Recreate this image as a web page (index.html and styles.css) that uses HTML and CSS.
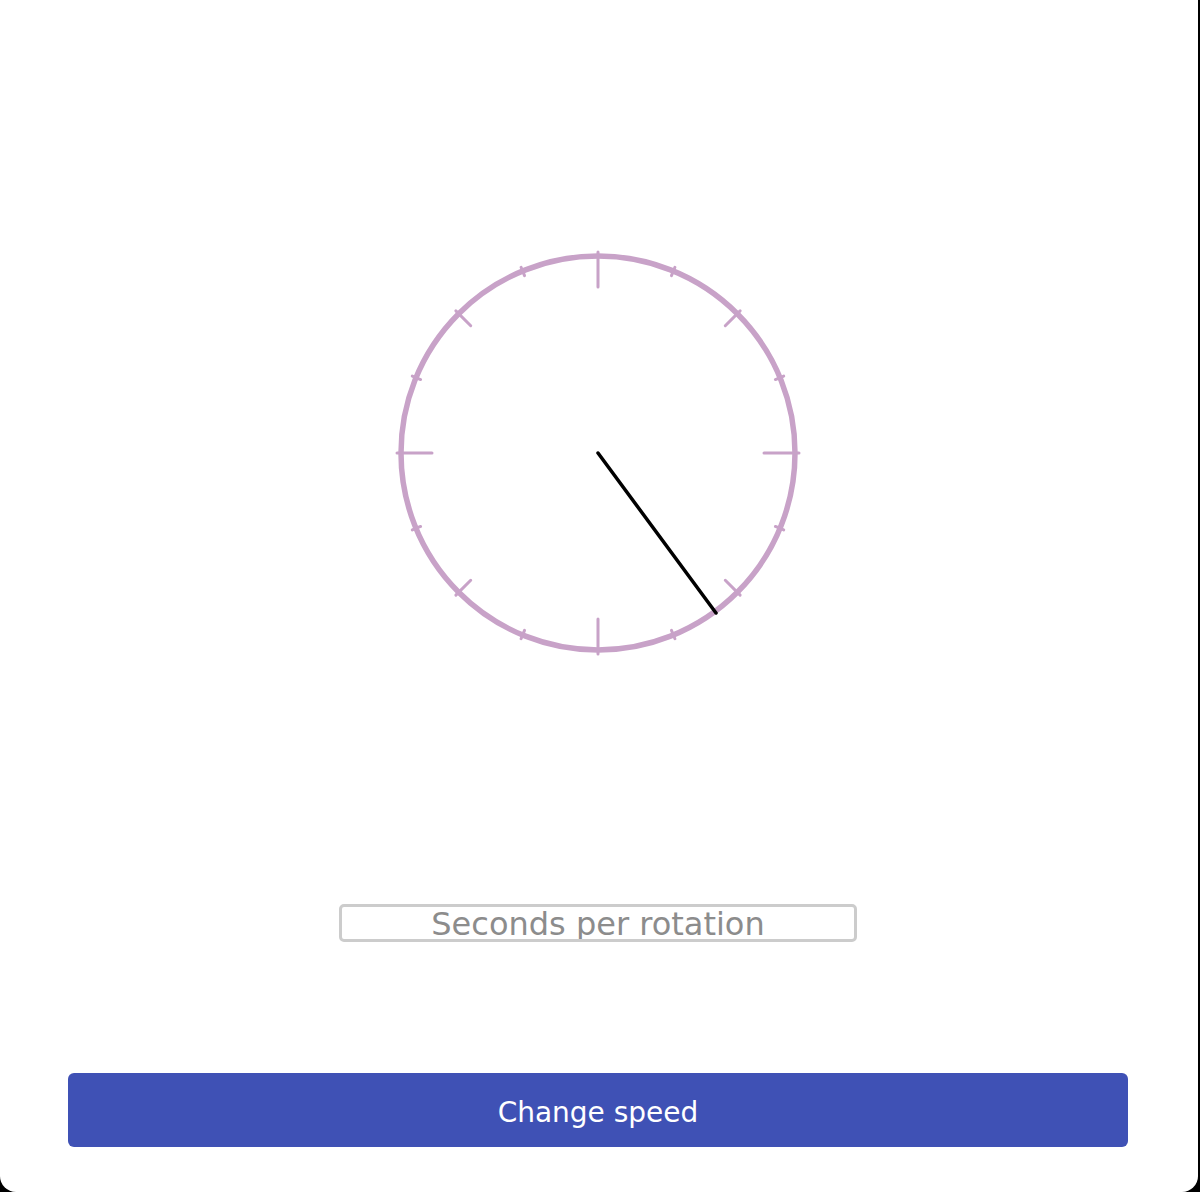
FILE: index.html
```html
<!DOCTYPE html>
<html>
<head>
<meta charset="utf-8">
<link rel="stylesheet" href="styles.css">
</head>
<body>
<main class="panel">
  <div class="clock-wrap">
    <svg class="clock" width="410" height="410" viewBox="-205 -205 410 410">
      <circle cx="0" cy="0" r="197" fill="none" stroke="#c8a2c8" stroke-width="5.5"/>
      <g stroke="#c8a2c8" stroke-width="3" stroke-linecap="round">
        <line x1="0" y1="-201" x2="0" y2="-166" transform="rotate(0)"/>
        <line x1="0" y1="-201" x2="0" y2="-192" transform="rotate(22.5)"/>
        <line x1="0" y1="-201" x2="0" y2="-180" transform="rotate(45)"/>
        <line x1="0" y1="-201" x2="0" y2="-192" transform="rotate(67.5)"/>
        <line x1="0" y1="-201" x2="0" y2="-166" transform="rotate(90)"/>
        <line x1="0" y1="-201" x2="0" y2="-192" transform="rotate(112.5)"/>
        <line x1="0" y1="-201" x2="0" y2="-180" transform="rotate(135)"/>
        <line x1="0" y1="-201" x2="0" y2="-192" transform="rotate(157.5)"/>
        <line x1="0" y1="-201" x2="0" y2="-166" transform="rotate(180)"/>
        <line x1="0" y1="-201" x2="0" y2="-192" transform="rotate(202.5)"/>
        <line x1="0" y1="-201" x2="0" y2="-180" transform="rotate(225)"/>
        <line x1="0" y1="-201" x2="0" y2="-192" transform="rotate(247.5)"/>
        <line x1="0" y1="-201" x2="0" y2="-166" transform="rotate(270)"/>
        <line x1="0" y1="-201" x2="0" y2="-192" transform="rotate(292.5)"/>
        <line x1="0" y1="-201" x2="0" y2="-180" transform="rotate(315)"/>
        <line x1="0" y1="-201" x2="0" y2="-192" transform="rotate(337.5)"/>
      </g>
      <line x1="0" y1="0" x2="118" y2="160" stroke="#000" stroke-width="3.5" stroke-linecap="round"/>
    </svg>
  </div>
  <input class="speed-input" type="text" placeholder="Seconds per rotation">
  <button class="speed-button" type="button">Change speed</button>
</main>
</body>
</html>
```
FILE: styles.css
```css
html, body {
  margin: 0;
  padding: 0;
  background: #000;
}

body {
  width: 1200px;
  height: 1192px;
  overflow: hidden;
}

.panel {
  width: 1198px;
  height: 1192px;
  box-sizing: border-box;
  background: #fff;
  border-radius: 0 0 16px 16px;
  display: flex;
  flex-direction: column;
  align-items: center;
  padding-top: 248px;
  padding-right: 2px;
  font-family: "DejaVu Sans", Verdana, sans-serif;
}

.clock-wrap {
  width: 410px;
  height: 410px;
}

.clock {
  display: block;
}

.speed-input {
  margin-top: 246px;
  width: 518px;
  height: 38px;
  box-sizing: border-box;
  border: 3px solid #cccccc;
  border-radius: 5px;
  padding: 2px 4px 0;
  font-family: "DejaVu Sans", Verdana, sans-serif;
  font-size: 32px;
  line-height: 32px;
  text-align: center;
  color: #333;
  background: #fff;
  outline: none;
}

.speed-input::placeholder {
  color: #8c8c8c;
}

.speed-button {
  margin-top: 131px;
  align-self: flex-start;
  margin-left: 68px;
  width: 1060px;
  height: 74px;
  padding: 4px 0 0;
  border: none;
  border-radius: 6px;
  background: #3f51b5;
  color: #fff;
  font-family: "DejaVu Sans", Verdana, sans-serif;
  font-size: 28px;
  cursor: pointer;
}
```
